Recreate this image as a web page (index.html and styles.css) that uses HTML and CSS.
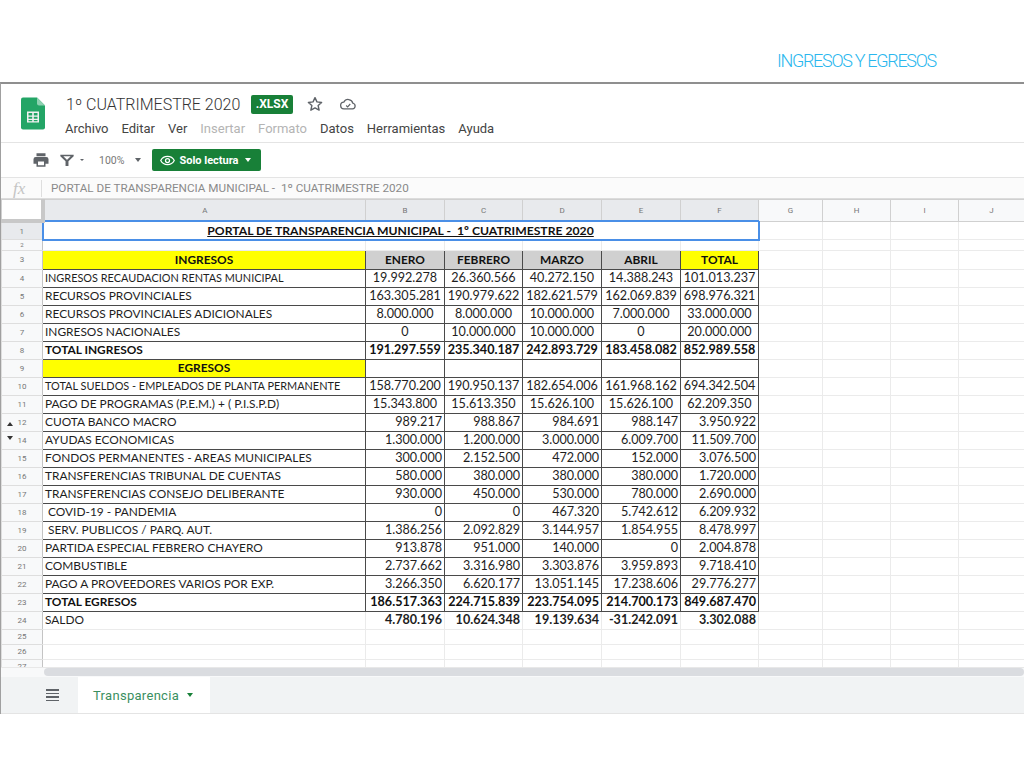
FILE: index.html
```html
<!DOCTYPE html>
<html lang="es">

<head>
    <meta charset="UTF-8">
    <title>Ingresos y egresos</title>
    <link rel="stylesheet" href="styles.css">
</head>

<body>
    <header class="page-head">
        <h1 class="page-title">INGRESOS Y EGRESOS</h1>
    </header>

    <div class="shot">
        <div class="doc-bar">
            <svg class="doc-logo" viewBox="0 0 24 32" width="24" height="33">
                <path d="M2 0h14l8 8v22a2 2 0 0 1-2 2H2a2 2 0 0 1-2-2V2a2 2 0 0 1 2-2z" fill="#23a566" />
                <path d="M16 0l8 8h-6a2 2 0 0 1-2-2z" fill="#8ed1b1" />
                <path d="M6 14h12v11H6z M7.500 15.500v2.500h3.700v-2.500z M12.800 15.500v2.500h3.700v-2.500z M7.500 19.300v1.900h3.700v-1.900z M12.800 19.300v1.900h3.700v-1.900z M7.500 22.500v1.200h3.700v-1.200z M12.800 22.500v1.200h3.700v-1.200z" fill="#f1f1f1" fill-rule="evenodd" />
            </svg>
            <div class="doc-info">
                <div class="doc-name-row">
                    <span class="doc-name">1º CUATRIMESTRE 2020</span>
                    <span class="doc-badge">.XLSX</span>
                    <svg class="star" viewBox="0 0 24 24" width="18" height="18">
                        <path d="M12 3.500l2.600 5.700 6.200.7-4.600 4.200 1.300 6.100L12 17.200l-5.500 3 1.300-6.100-4.600-4.200 6.200-.7z" fill="none" stroke="#5f6368" stroke-width="1.900" stroke-linejoin="round" />
                    </svg>
                    <svg class="cloud" viewBox="0 0 24 24" width="18" height="18">
                        <path d="M7 18.500a4.500 4.500 0 0 1-.6-9A6.500 6.500 0 0 1 18.500 11a3.800 3.800 0 0 1-.5 7.500z" fill="none" stroke="#5f6368" stroke-width="1.700" />
                        <path d="M9.500 14l2 1.800 3.500-3.800" fill="none" stroke="#5f6368" stroke-width="1.500" />
                    </svg>
                </div>
                <nav class="menu">
                    <span>Archivo</span>
                    <span>Editar</span>
                    <span>Ver</span>
                    <span class="off">Insertar</span>
                    <span class="off">Formato</span>
                    <span>Datos</span>
                    <span>Herramientas</span>
                    <span>Ayuda</span>
                </nav>
            </div>
        </div>

        <div class="tool-bar">
            <svg class="print" viewBox="0 0 24 24" width="18" height="18">
                <path d="M19 8H5a3 3 0 0 0-3 3v6h4v4h12v-4h4v-6a3 3 0 0 0-3-3zm-3 11H8v-5h8zM18 3H6v4h12z" fill="#5f6368" />
            </svg>
            <svg class="filter" viewBox="0 0 24 24" width="16" height="16">
                <path d="M2 4h20v2.500l-7.800 7.500V21h-4.400v-7L2 6.500zM6.500 6.500l5.300 5.200h.4l5.300-5.200z" fill="#5f6368" fill-rule="evenodd" />
            </svg>
            <span class="caret filter-caret"></span>
            <span class="zoom-val">100%</span>
            <span class="caret zoom-caret"></span>
            <span class="readonly">
                <svg viewBox="0 0 24 24" width="15" height="15">
                    <path d="M12 5.500C7 5.500 3 8.500 1.200 12 3 15.500 7 18.500 12 18.500s9-3 10.800-6.500C21 8.500 17 5.500 12 5.500z" fill="none" stroke="#fff" stroke-width="2" />
                    <circle cx="12" cy="12" r="3.200" fill="none" stroke="#fff" stroke-width="2" />
                </svg>
                Solo lectura
                <span class="caret caret-white"></span>
            </span>
        </div>

        <div class="fx-bar">
            <span class="fx">fx</span>
            <span class="fx-text">PORTAL DE TRANSPARENCIA MUNICIPAL -&nbsp; 1º CUATRIMESTRE 2020</span>
        </div>

        <div class="grid-wrap">
            <table class="grid">
                <colgroup>
                    <col class="c-h">
                    <col class="c-a">
                    <col class="c-b">
                    <col class="c-c">
                    <col class="c-d">
                    <col class="c-e">
                    <col class="c-f">
                    <col class="c-g">
                    <col class="c-i">
                    <col class="c-i">
                    <col class="c-j">
                </colgroup>
                <tr class="cols">
                    <th class="corner"></th>
                    <th class="sel">A</th>
                    <th class="sel">B</th>
                    <th class="sel">C</th>
                    <th class="sel">D</th>
                    <th class="sel">E</th>
                    <th class="sel">F</th>
                    <th>G</th>
                    <th>H</th>
                    <th>I</th>
                    <th>J</th>
                </tr>
                <tr class="r1">
                    <th>1</th>
                    <td colspan="6" class="title-cell"><u>PORTAL DE TRANSPARENCIA MUNICIPAL -&nbsp; 1º CUATRIMESTRE 2020</u></td>
                    <td></td><td></td><td></td><td></td>
                </tr>
                <tr class="r2">
                    <th>2</th>
                    <td></td><td></td><td></td><td></td><td></td><td></td><td></td><td></td><td></td><td></td>
                </tr>
                <tr class="r3 data bold mid">
                    <th>3</th>
                    <td class="yellow mid">INGRESOS</td>
                    <td class="gray">ENERO</td>
                    <td class="gray">FEBRERO</td>
                    <td class="gray">MARZO</td>
                    <td class="gray">ABRIL</td>
                    <td class="yellow">TOTAL</td>
                    <td class="free"></td><td class="free"></td><td class="free"></td><td class="free"></td>
                </tr>
                <tr class="data mid small">
                    <th>4</th>
                    <td>INGRESOS RECAUDACION RENTAS MUNICIPAL</td>
                    <td>19.992.278</td><td>26.360.566</td><td>40.272.150</td><td>14.388.243</td><td>101.013.237</td>
                    <td class="free"></td><td class="free"></td><td class="free"></td><td class="free"></td>
                </tr>
                <tr class="data mid">
                    <th>5</th>
                    <td>RECURSOS PROVINCIALES</td>
                    <td>163.305.281</td><td>190.979.622</td><td>182.621.579</td><td>162.069.839</td><td>698.976.321</td>
                    <td class="free"></td><td class="free"></td><td class="free"></td><td class="free"></td>
                </tr>
                <tr class="data mid">
                    <th>6</th>
                    <td>RECURSOS PROVINCIALES ADICIONALES</td>
                    <td>8.000.000</td><td>8.000.000</td><td>10.000.000</td><td>7.000.000</td><td>33.000.000</td>
                    <td class="free"></td><td class="free"></td><td class="free"></td><td class="free"></td>
                </tr>
                <tr class="data mid">
                    <th>7</th>
                    <td>INGRESOS NACIONALES</td>
                    <td>0</td><td>10.000.000</td><td>10.000.000</td><td>0</td><td>20.000.000</td>
                    <td class="free"></td><td class="free"></td><td class="free"></td><td class="free"></td>
                </tr>
                <tr class="data mid bold">
                    <th>8</th>
                    <td>TOTAL INGRESOS</td>
                    <td>191.297.559</td><td>235.340.187</td><td>242.893.729</td><td>183.458.082</td><td>852.989.558</td>
                    <td class="free"></td><td class="free"></td><td class="free"></td><td class="free"></td>
                </tr>
                <tr class="data mid bold">
                    <th>9</th>
                    <td class="yellow mid">EGRESOS</td>
                    <td></td><td></td><td></td><td></td><td></td>
                    <td class="free"></td><td class="free"></td><td class="free"></td><td class="free"></td>
                </tr>
                <tr class="data mid small">
                    <th>10</th>
                    <td>TOTAL SUELDOS - EMPLEADOS DE PLANTA PERMANENTE</td>
                    <td>158.770.200</td><td>190.950.137</td><td>182.654.006</td><td>161.968.162</td><td>694.342.504</td>
                    <td class="free"></td><td class="free"></td><td class="free"></td><td class="free"></td>
                </tr>
                <tr class="data mid">
                    <th>11</th>
                    <td>PAGO DE PROGRAMAS (P.E.M.) + ( P.I.S.P.D)</td>
                    <td>15.343.800</td><td>15.613.350</td><td>15.626.100</td><td>15.626.100</td><td>62.209.350</td>
                    <td class="free"></td><td class="free"></td><td class="free"></td><td class="free"></td>
                </tr>
                <tr class="data">
                    <th class="has-mark"><span class="mark up"></span>12</th>
                    <td>CUOTA BANCO MACRO</td>
                    <td>989.217</td><td>988.867</td><td>984.691</td><td>988.147</td><td>3.950.922</td>
                    <td class="free"></td><td class="free"></td><td class="free"></td><td class="free"></td>
                </tr>
                <tr class="data">
                    <th class="has-mark"><span class="mark down"></span>14</th>
                    <td>AYUDAS ECONOMICAS</td>
                    <td>1.300.000</td><td>1.200.000</td><td>3.000.000</td><td>6.009.700</td><td>11.509.700</td>
                    <td class="free"></td><td class="free"></td><td class="free"></td><td class="free"></td>
                </tr>
                <tr class="data">
                    <th>15</th>
                    <td>FONDOS PERMANENTES - AREAS MUNICIPALES</td>
                    <td>300.000</td><td>2.152.500</td><td>472.000</td><td>152.000</td><td>3.076.500</td>
                    <td class="free"></td><td class="free"></td><td class="free"></td><td class="free"></td>
                </tr>
                <tr class="data">
                    <th>16</th>
                    <td>TRANSFERENCIAS TRIBUNAL DE CUENTAS</td>
                    <td>580.000</td><td>380.000</td><td>380.000</td><td>380.000</td><td>1.720.000</td>
                    <td class="free"></td><td class="free"></td><td class="free"></td><td class="free"></td>
                </tr>
                <tr class="data">
                    <th>17</th>
                    <td>TRANSFERENCIAS CONSEJO DELIBERANTE</td>
                    <td>930.000</td><td>450.000</td><td>530.000</td><td>780.000</td><td>2.690.000</td>
                    <td class="free"></td><td class="free"></td><td class="free"></td><td class="free"></td>
                </tr>
                <tr class="data">
                    <th>18</th>
                    <td class="ind">COVID-19 - PANDEMIA</td>
                    <td>0</td><td>0</td><td>467.320</td><td>5.742.612</td><td>6.209.932</td>
                    <td class="free"></td><td class="free"></td><td class="free"></td><td class="free"></td>
                </tr>
                <tr class="data">
                    <th>19</th>
                    <td class="ind">SERV. PUBLICOS / PARQ. AUT.</td>
                    <td>1.386.256</td><td>2.092.829</td><td>3.144.957</td><td>1.854.955</td><td>8.478.997</td>
                    <td class="free"></td><td class="free"></td><td class="free"></td><td class="free"></td>
                </tr>
                <tr class="data">
                    <th>20</th>
                    <td>PARTIDA ESPECIAL FEBRERO CHAYERO</td>
                    <td>913.878</td><td>951.000</td><td>140.000</td><td>0</td><td>2.004.878</td>
                    <td class="free"></td><td class="free"></td><td class="free"></td><td class="free"></td>
                </tr>
                <tr class="data">
                    <th>21</th>
                    <td>COMBUSTIBLE</td>
                    <td>2.737.662</td><td>3.316.980</td><td>3.303.876</td><td>3.959.893</td><td>9.718.410</td>
                    <td class="free"></td><td class="free"></td><td class="free"></td><td class="free"></td>
                </tr>
                <tr class="data">
                    <th>22</th>
                    <td>PAGO A PROVEEDORES VARIOS POR EXP.</td>
                    <td>3.266.350</td><td>6.620.177</td><td>13.051.145</td><td>17.238.606</td><td>29.776.277</td>
                    <td class="free"></td><td class="free"></td><td class="free"></td><td class="free"></td>
                </tr>
                <tr class="data bold">
                    <th>23</th>
                    <td>TOTAL EGRESOS</td>
                    <td>186.517.363</td><td>224.715.839</td><td>223.754.095</td><td>214.700.173</td><td>849.687.470</td>
                    <td class="free"></td><td class="free"></td><td class="free"></td><td class="free"></td>
                </tr>
                <tr class="data saldo">
                    <th>24</th>
                    <td>SALDO</td>
                    <td>4.780.196</td><td>10.624.348</td><td>19.139.634</td><td>-31.242.091</td><td>3.302.088</td>
                    <td class="free"></td><td class="free"></td><td class="free"></td><td class="free"></td>
                </tr>
                <tr class="r-low">
                    <th>25</th>
                    <td></td><td></td><td></td><td></td><td></td><td></td><td></td><td></td><td></td><td></td>
                </tr>
                <tr class="r-low">
                    <th>26</th>
                    <td></td><td></td><td></td><td></td><td></td><td></td><td></td><td></td><td></td><td></td>
                </tr>
                <tr class="r-low">
                    <th>27</th>
                    <td></td><td></td><td></td><td></td><td></td><td></td><td></td><td></td><td></td><td></td>
                </tr>
            </table>
        </div>

        <div class="scroll-row">
            <div class="scroll-thumb"></div>
        </div>

        <div class="tab-bar">
            <span class="all-sheets">
                <i></i><i></i><i></i><i></i>
            </span>
            <span class="tab">Transparencia <span class="caret caret-green"></span></span>
        </div>
    </div>
</body>

</html>
```

FILE: styles.css
```css
body {
    margin: 0;
    background: #fff;
    font-family: Roboto, "Liberation Sans", sans-serif;
}

.page-head {
    display: flex;
    justify-content: flex-end;
    align-items: flex-end;
    height: 82px;
    padding-right: 88px;
    box-sizing: border-box;
}

.page-title {
    margin: 0 0 11px;
    font-size: 18px;
    font-weight: 300;
    line-height: 20px;
    letter-spacing: -1.300px;
    color: #2ab7ee;
}

.shot {
    display: flex;
    flex-direction: column;
    height: 632px;
    border-top: 2px solid #8f8f8f;
    border-left: 1px solid #a0a0a0;
    box-sizing: border-box;
    overflow: hidden;
}

/* doc title */
.doc-bar {
    display: flex;
    flex: 0 0 59px;
    box-sizing: border-box;
    padding: 10px 0 0 20px;
    border-bottom: 1px solid #e4e4e4;
}

.doc-logo {
    margin-top: 3px;
}

.doc-info {
    margin-left: 21px;
}

.doc-name-row {
    display: flex;
    align-items: center;
    height: 20px;
}

.doc-name {
    font-size: 16px;
    font-weight: 300;
    color: #333;
    width: 185px;
}

.doc-badge {
    width: 42px;
    height: 19px;
    border-radius: 2px;
    background: #188038;
    color: #fff;
    font-size: 12px;
    font-weight: 700;
    line-height: 19px;
    text-align: center;
}

.star {
    margin-left: 13px;
}

.cloud {
    margin-left: 15px;
}

.menu {
    display: flex;
    gap: 13px;
    margin-top: 7px;
    margin-left: -1px;
    font-size: 13px;
    line-height: 16px;
    color: #444;
}

.menu .off {
    color: #b4b4b4;
}

/* toolbar */
.tool-bar {
    display: flex;
    align-items: center;
    flex: 0 0 35px;
    box-sizing: border-box;
    padding-left: 31px;
    border-bottom: 1px solid #e4e4e4;
}

.filter {
    margin-left: 9px;
}

.caret {
    display: inline-block;
    width: 0;
    height: 0;
    border: 3.500px solid transparent;
    border-top: 4px solid #5f6368;
    border-bottom: 0;
}

.filter-caret {
    margin-left: 5px;
    border-width: 2.500px;
    border-bottom: 0;
}

.zoom-val {
    margin-left: 15px;
    font-size: 10.500px;
    color: #777;
}

.zoom-caret {
    margin-left: 11px;
}

.readonly {
    display: flex;
    align-items: center;
    gap: 4px;
    width: 109px;
    height: 22px;
    margin-left: 11px;
    padding-left: 8px;
    box-sizing: border-box;
    border-radius: 2px;
    background: #188038;
    color: #fff;
    font-size: 11px;
    font-weight: 700;
}

.caret-white {
    margin-left: 3px;
    border-top-color: #fff;
}

/* formula */
.fx-bar {
    display: flex;
    align-items: center;
    flex: 0 0 21px;
    background: #fbfbfb;
    padding-left: 12px;
    border-bottom: 1px solid #dcdcdc;
    box-sizing: border-box;
}

.fx {
    width: 28px;
    font-family: "Liberation Serif", serif;
    font-style: italic;
    font-size: 17px;
    color: #c4c4c4;
    border-right: 1px solid #dedede;
    line-height: 17px;
}

.fx-text {
    margin-left: 9px;
    font-size: 11.700px;
    color: #8a8a8a;
}

/* sheet */
.grid-wrap {
    flex: 1;
    min-height: 0;
    overflow: hidden;
}

.grid {
    table-layout: fixed;
    border-collapse: collapse;
    width: 1023px;
    font-family: Lato, "Open Sans", sans-serif;
    font-size: 12.600px;
    color: #1e1e1e;
}

.c-h { width: 41px; }
.c-a { width: 323px; }
.c-b { width: 79px; }
.c-c { width: 78px; }
.c-d { width: 79px; }
.c-e { width: 79px; }
.c-f { width: 78px; }
.c-g { width: 64px; }
.c-i { width: 68px; }
.c-j { width: 66px; }

.grid td,
.grid th {
    padding: 0;
    height: 17px;
    border: 1px solid #ebebeb;
    white-space: nowrap;
    overflow: hidden;
}

.grid th {
    position: relative;
    background: #f8f9fa;
    border-color: #dedede;
    border-right-color: #c4c4c4;
    font-family: Roboto, sans-serif;
    font-size: 8px;
    font-weight: 400;
    color: #777;
}

.grid .cols th {
    height: 19px;
    border-color: #d0d0d0;
}

.grid .cols .sel {
    background: #e8eaed;
}

.grid .cols .corner {
    background: #fff;
    border-right: 4px solid #c8c8c8;
    border-bottom: 4px solid #c8c8c8;
}

.grid .r1 td,
.grid .r1 th {
    height: 16px;
}

.grid .r1 th {
    background: #e8eaed;
}

.title-cell {
    border: 2px solid #4a8fe7 !important;
    text-align: center;
    font-size: 12.200px;
    font-weight: 700;
    color: #111;
}

.grid .r2 td,
.grid .r2 th {
    height: 9px;
    font-size: 6px;
    line-height: 9px;
}

.grid .r3 td {
    height: 18px;
}

.grid .r-low td,
.grid .r-low th {
    height: 14px;
}

.data td {
    border-color: #4a4a4a;
    padding-left: 2px;
    padding-right: 2px;
    text-align: right;
    line-height: 16px;
}

.data td:nth-child(2) {
    text-align: left;
    font-size: 11.900px;
}

.data .ind {
    padding-left: 5px;
}

.data .free {
    border-color: #ebebeb;
}

.mid td {
    text-align: center;
}

.data td.mid {
    text-align: center;
}

.bold td {
    font-weight: 700;
    color: #111;
}

.r3 td {
    font-size: 11.900px;
}

.small td:nth-child(2) {
    font-size: 10.900px;
}

.yellow {
    background: #ff0;
}

.gray {
    background: #d0d0d0;
}

.saldo td {
    border-left-color: #ebebeb;
    border-right-color: #ebebeb;
    border-bottom-color: #ebebeb;
    font-weight: 700;
}

.saldo td:nth-child(2) {
    font-weight: 400;
}

.mark {
    position: absolute;
    left: 5px;
    width: 0;
    height: 0;
    border: 3px solid transparent;
}

.mark.up {
    top: 8px;
    border-top: 0;
    border-bottom: 4px solid #333;
}

.mark.down {
    top: 4px;
    border-bottom: 0;
    border-top: 4px solid #333;
}

/* bottom */
.scroll-row {
    flex: 0 0 10px;
    padding-left: 43px;
    background: #f8f9fa;
    box-sizing: border-box;
    border-top: 1px solid #e8e8e8;
}

.scroll-thumb {
    height: 8px;
    border-radius: 4px;
    background: #dadce0;
}

.tab-bar {
    display: flex;
    flex: 0 0 37px;
    background: #f1f3f4;
    box-sizing: border-box;
    border-bottom: 1px solid #e4e4e4;
}

.all-sheets {
    display: flex;
    flex-direction: column;
    justify-content: center;
    gap: 2px;
    width: 13px;
    margin-left: 45px;
}

.all-sheets i {
    display: block;
    height: 1.500px;
    background: #5f6368;
}

.tab {
    display: flex;
    align-items: center;
    gap: 8px;
    width: 132px;
    margin-left: 19px;
    padding-left: 15px;
    box-sizing: border-box;
    background: #fff;
    color: #3a8f5f;
    font-size: 13px;
    letter-spacing: 0.300px;
}

.caret-green {
    border-top-color: #188038;
}
```
